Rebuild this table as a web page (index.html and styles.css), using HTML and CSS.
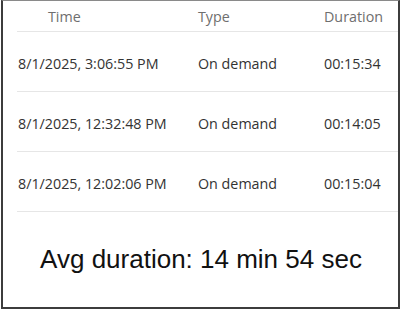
FILE: index.html
```html
<!DOCTYPE html>
<html lang="en">
<head>
  <meta charset="UTF-8">
  <title>Run history</title>
  <link rel="stylesheet" href="styles.css">
</head>
<body>

<!-- Run history card -->
<div class="card">
  <div class="runs">
    <div class="row head">
      <span class="col-time">Time</span>
      <span>Type</span>
      <span>Duration</span>
    </div>
    <div class="row">
      <span>8/1/2025, 3:06:55 PM</span>
      <span>On demand</span>
      <span>00:15:34</span>
    </div>
    <div class="row">
      <span>8/1/2025, 12:32:48 PM</span>
      <span>On demand</span>
      <span>00:14:05</span>
    </div>
    <div class="row">
      <span>8/1/2025, 12:02:06 PM</span>
      <span>On demand</span>
      <span>00:15:04</span>
    </div>
  </div>

  <!-- Average of the runs above -->
  <div class="average">Avg duration: 14 min 54 sec</div>
</div>

</body>
</html>
```

FILE: styles.css
```css
body {
  margin: 0;
  background: #fff;
}
.card {
  box-sizing: border-box;
  width: 399px;
  height: 309px;
  margin-left: 1px;
  border: 2px solid #3c3c3c;
  border-top: 1px solid #8a8a8a;
  display: flex;
  flex-direction: column;
}
.runs {
  margin-left: 14px;
  font-family: "Open Sans", sans-serif;
  font-size: 14.3px;
  color: #333;
}
.row {
  display: grid;
  grid-template-columns: 180px 126px 1fr;
  align-items: center;
  height: 56px;
  padding: 3px 0 0 1px;
  border-bottom: 1px solid #e6e6e6;
}
.row.head {
  height: 29px;
  padding-top: 1px;
  color: #6e6e6e;
}
.col-time {
  padding-left: 30px;
}
.average {
  flex: 1;
  display: flex;
  align-items: center;
  justify-content: center;
  padding-left: 1px;
  font-family: "Liberation Sans", Arial, sans-serif;
  font-size: 26px;
  color: #111;
}
```
